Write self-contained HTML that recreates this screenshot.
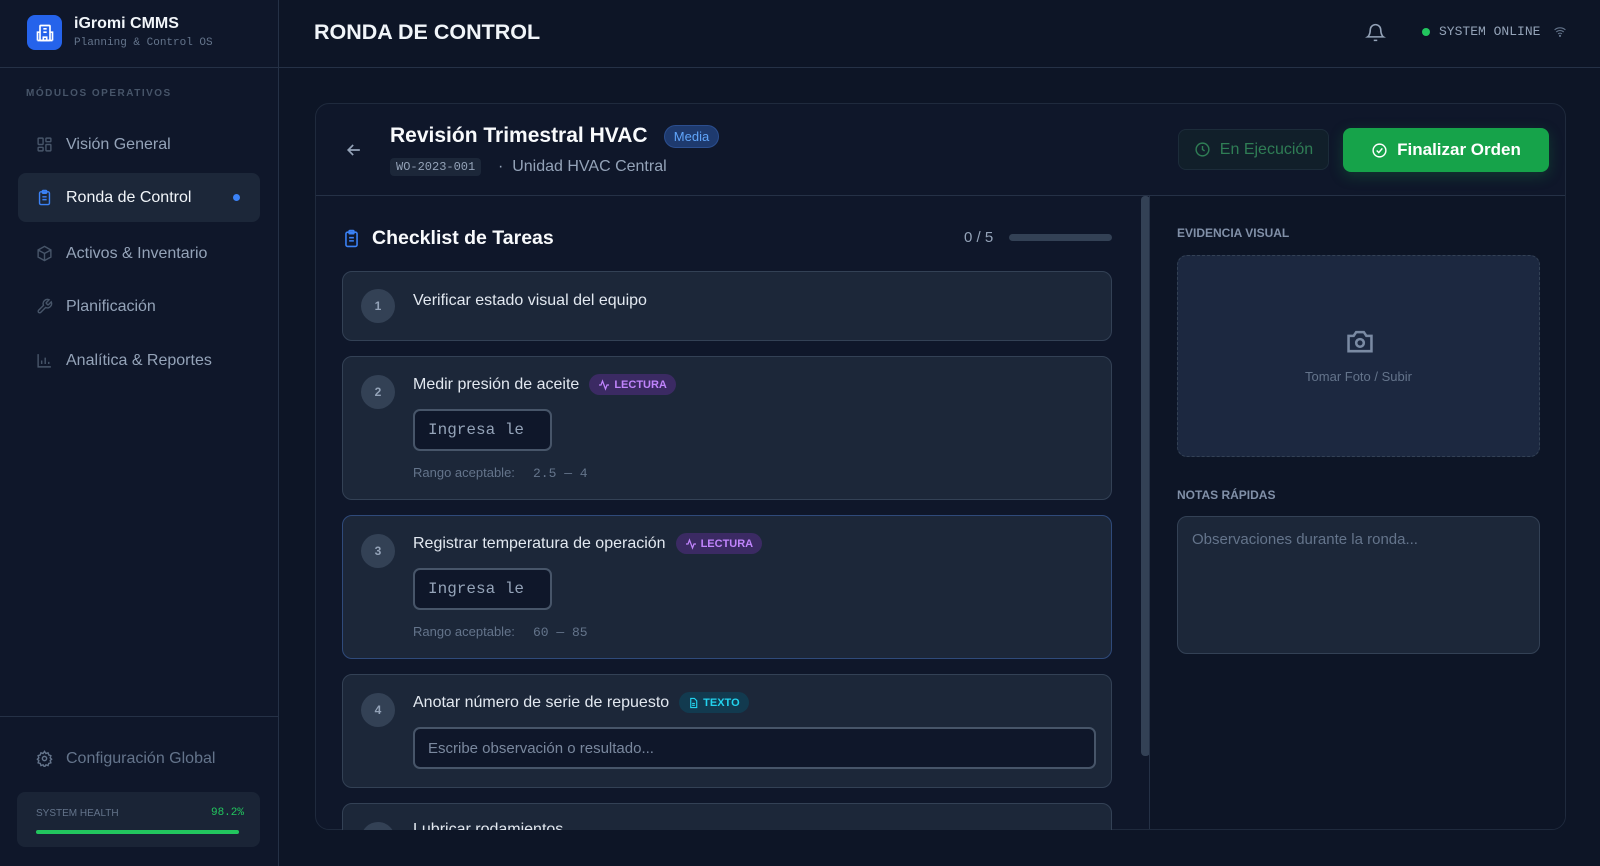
<!DOCTYPE html>
<html><head><meta charset="utf-8"><style>
*{box-sizing:border-box;margin:0;padding:0}
body{width:1600px;height:866px;background:#0d1526;font-family:"Liberation Sans",sans-serif;color:#e2e8f0;position:relative;overflow:hidden}
.a{position:absolute}
.mono{font-family:"Liberation Mono",monospace}
.side{left:0;top:0;width:279px;height:866px;background:#0f172a;border-right:1px solid #253146}
.nav{left:18px;width:242px;height:49px;border-radius:8px;display:flex;align-items:center;padding-left:18px;font-size:16px;color:#94a3b8}
.nav svg{margin-right:13px}
.task{left:342px;width:770px;background:#1c2739;border:1px solid #334155;border-radius:10px}
.num{left:18px;width:34px;height:34px;border-radius:50%;background:#334155;color:#94a3b8;font-size:12px;font-weight:bold;display:flex;align-items:center;justify-content:center}
.tt{left:70px;font-size:16px;color:#e2e8f0;white-space:nowrap;display:flex;align-items:center}
.badge{margin-left:10px;height:21px;border-radius:11px;padding:0 9px;font-size:11px;font-weight:bold;display:inline-flex;align-items:center;gap:4px}
.lec{background:#3b2a63;color:#c084fc}
.inp{left:70px;width:139px;height:42px;border:2px solid #475569;border-radius:7px;background:#0f172a;color:#94a3b8;font-size:16px;padding-left:13px;display:flex;align-items:center}
.rg{left:70px;font-size:13px;color:#64748b}
.lbl{font-size:12px;font-weight:bold;color:#8190a8}
</style></head><body>
<div class="a side">
 <div class="a" style="left:0;top:67px;width:279px;height:1px;background:#253146"></div>
 <div class="a" style="left:27px;top:15px;width:35px;height:35px;border-radius:8px;background:#2563eb;display:flex;align-items:center;justify-content:center">
  <svg width="20" height="20" viewBox="0 0 24 24" fill="none" stroke="#fff" stroke-width="2"><rect x="6" y="3" width="12" height="18" rx="1"/><path d="M3 21h18M10 7h4M10 11h4M10 21v-4h4v4M3 21V11h3M21 21V11h-3"/></svg></div>
 <div class="a" style="left:74px;top:15px;font-size:16px;font-weight:bold;color:#f1f5f9">iGromi CMMS</div>
 <div class="a mono" style="left:74px;top:37px;font-size:11px;color:#64748b">Planning &amp; Control OS</div>
 <div class="a" style="left:26px;top:88px;font-size:10px;font-weight:bold;letter-spacing:1.5px;color:#475569">MÓDULOS OPERATIVOS</div>
 <div class="a nav" style="top:120px"><svg width="17" height="17" viewBox="0 0 24 24" fill="none" stroke="#475569" stroke-width="2"><rect x="3" y="3" width="7" height="9" rx="1"/><rect x="14" y="3" width="7" height="5" rx="1"/><rect x="14" y="12" width="7" height="9" rx="1"/><rect x="3" y="16" width="7" height="5" rx="1"/></svg>Visión General</div>
 <div class="a nav" style="top:173px;background:#1c2739;color:#f1f5f9"><svg width="17" height="17" viewBox="0 0 24 24" fill="none" stroke="#3b82f6" stroke-width="2"><rect x="5" y="4" width="14" height="18" rx="2"/><rect x="9" y="2" width="6" height="4" rx="1"/><path d="M9 11h6M9 15h6"/></svg>Ronda de Control<span class="a" style="right:20px;top:21px;width:7px;height:7px;border-radius:50%;background:#3b82f6"></span></div>
 <div class="a nav" style="top:229px"><svg width="17" height="17" viewBox="0 0 24 24" fill="none" stroke="#475569" stroke-width="2"><path d="M12 2l9 5v10l-9 5-9-5V7z M3 7l9 5 9-5M12 12v10"/></svg>Activos &amp; Inventario</div>
 <div class="a nav" style="top:282px"><svg width="17" height="17" viewBox="0 0 24 24" fill="none" stroke="#475569" stroke-width="2"><path d="M14.7 6.3a1 1 0 0 0 0 1.4l1.6 1.6a1 1 0 0 0 1.4 0l3.8-3.8a6 6 0 0 1-7.9 7.9l-6.9 6.9a2.1 2.1 0 0 1-3-3l6.9-6.9a6 6 0 0 1 7.9-7.9z"/></svg>Planificación</div>
 <div class="a nav" style="top:336px"><svg width="17" height="17" viewBox="0 0 24 24" fill="none" stroke="#475569" stroke-width="2"><path d="M3 3v18h18M8 17v-5M13 17V8M18 17v-3"/></svg>Analítica &amp; Reportes</div>
 <div class="a" style="left:0;top:716px;width:279px;height:1px;background:#253146"></div>
 <div class="a nav" style="top:734px;color:#64748b"><svg width="17" height="17" viewBox="0 0 24 24" fill="none" stroke="#64748b" stroke-width="2"><circle cx="12" cy="12" r="3"/><path d="M12 2l2 3 3-1 1 3 3 1-1 3 2 2-2 2 1 3-3 1-1 3-3-1-2 3-2-3-3 1-1-3-3-1 1-3-2-2 2-2-1-3 3-1 1-3 3 1z"/></svg>Configuración Global</div>
 <div class="a" style="left:17px;top:792px;width:243px;height:55px;border-radius:8px;background:#1a2436">
  <div class="a" style="left:19px;top:16px;font-size:10px;color:#64748b">SYSTEM HEALTH</div>
  <div class="a mono" style="right:16px;top:15px;font-size:11px;color:#22c55e">98.2%</div>
  <div class="a" style="left:19px;top:38px;width:203px;height:4px;border-radius:2px;background:#22c55e"></div>
 </div>
</div>
<div class="a" style="left:279px;top:67px;width:1321px;height:1px;background:#253146"></div>
<div class="a" style="left:314px;top:20px;font-size:21.5px;font-weight:bold;color:#f1f5f9">RONDA DE CONTROL</div>
<svg class="a" style="left:1365px;top:21px" width="21" height="23" viewBox="0 0 24 24" fill="none" stroke="#94a3b8" stroke-width="1.8"><path d="M6 9a6 6 0 0 1 12 0c0 6 3 8 3 8H3s3-2 3-8M10 21h4"/></svg>
<div class="a" style="left:1422px;top:28px;width:8px;height:8px;border-radius:50%;background:#22c55e"></div>
<div class="a mono" style="left:1439px;top:24px;font-size:13px;color:#94a3b8">SYSTEM ONLINE</div>
<svg class="a" style="left:1553px;top:25px" width="14" height="13" viewBox="0 0 24 24" fill="none" stroke="#64748b" stroke-width="2"><path d="M2 9a15 15 0 0 1 20 0M5 13a10 10 0 0 1 14 0M8.5 16.5a5 5 0 0 1 7 0"/><circle cx="12" cy="20" r="1"/></svg>

<div class="a" style="left:315px;top:103px;width:1251px;height:727px;border:1px solid #1f2a3d;border-radius:14px;background:#0f172a;overflow:hidden">
 <div class="a" style="left:0;top:91px;width:1251px;height:1px;background:#253146"></div>
 <svg class="a" style="left:28px;top:36px" width="20" height="20" viewBox="0 0 24 24" fill="none" stroke="#94a3b8" stroke-width="2"><path d="M19 12H5M11 6l-6 6 6 6"/></svg>
 <div class="a" style="left:74px;top:20px;font-size:21px;font-weight:bold;color:#f8fafc">Revisión Trimestral HVAC</div>
 <div class="a" style="left:348px;top:21px;height:23px;width:55px;border-radius:12px;background:#1e3a6e;border:1px solid #2b4e8f;color:#60a5fa;font-size:13px;display:flex;align-items:center;justify-content:center">Media</div>
 <div class="a mono" style="left:74px;top:54px;height:18px;padding:0 6px;border-radius:4px;background:#1c2739;font-size:12px;color:#94a3b8;line-height:18px">WO-2023-001</div>
 <div class="a" style="left:182px;top:54px;font-size:16px;color:#94a3b8">·&nbsp;&nbsp;Unidad HVAC Central</div>
 <div class="a" style="left:862px;top:25px;width:151px;height:41px;border-radius:8px;background:#111f2a;border:1px solid #1c2c3a;color:#2f7d55;font-size:16px;display:flex;align-items:center;justify-content:center;gap:9px"><svg width="17" height="17" viewBox="0 0 24 24" fill="none" stroke="#2f7d55" stroke-width="2"><circle cx="12" cy="12" r="9"/><path d="M12 7v5l3 2"/></svg>En Ejecución</div>
 <div class="a" style="left:1027px;top:24px;width:206px;height:44px;border-radius:8px;background:#16a34a;color:#fff;font-size:17px;font-weight:bold;display:flex;align-items:center;justify-content:center;gap:9px;box-shadow:0 4px 14px rgba(22,163,74,.25)"><svg width="17" height="17" viewBox="0 0 24 24" fill="none" stroke="#fff" stroke-width="2"><circle cx="12" cy="12" r="9"/><path d="M8 12l3 3 5-6"/></svg>Finalizar Orden</div>
 <div class="a" style="left:825px;top:92px;width:9px;height:560px;border-radius:4px;background:#334155"></div>
 <div class="a" style="left:833px;top:92px;width:1px;height:640px;background:#253146"></div>
 <div class="a" style="left:834px;top:92px;width:417px;height:640px;background:#0d1526"></div>
 <div class="a lbl" style="left:861px;top:122px">EVIDENCIA VISUAL</div>
 <div class="a" style="left:861px;top:151px;width:363px;height:202px;border:1px dashed #334155;border-radius:10px;background:#1c2840">
  <svg class="a" style="left:166px;top:71px" width="32" height="28" viewBox="0 0 24 22" fill="none" stroke="#7a8aa3" stroke-width="2"><path d="M3 7h4l2-3h6l2 3h4v12H3z"/><circle cx="12" cy="12.5" r="3"/></svg>
  <div class="a" style="left:0;width:100%;top:113px;text-align:center;font-size:13px;color:#64748b">Tomar Foto / Subir</div>
 </div>
 <div class="a lbl" style="left:861px;top:384px">NOTAS RÁPIDAS</div>
 <div class="a" style="left:861px;top:412px;width:363px;height:138px;border:1px solid #334155;border-radius:10px;background:#1c2739;padding:14px;font-size:15px;color:#64748b">Observaciones durante la ronda...</div>
</div>

<svg class="a" style="left:342px;top:228px" width="19" height="21" viewBox="0 0 24 24" fill="none" stroke="#3b82f6" stroke-width="2"><rect x="5" y="4" width="14" height="18" rx="2"/><rect x="9" y="2" width="6" height="4" rx="1"/><path d="M9 11h6M9 15h6"/></svg>
<div class="a" style="left:372px;top:227px;font-size:19.5px;font-weight:bold;color:#f8fafc">Checklist de Tareas</div>
<div class="a" style="left:964px;top:229px;font-size:15px;color:#94a3b8">0 / 5</div>
<div class="a" style="left:1009px;top:234px;width:103px;height:7px;border-radius:4px;background:#334155"></div>

<div class="a task" style="top:271px;height:70px"><div class="a num" style="top:17px">1</div><div class="a tt" style="top:20px">Verificar estado visual del equipo</div></div>
<div class="a task" style="top:356px;height:144px"><div class="a num" style="top:18px">2</div><div class="a tt" style="top:17px">Medir presión de aceite<span class="badge lec"><svg width="12" height="12" viewBox="0 0 24 24" fill="none" stroke="#c084fc" stroke-width="2.5"><path d="M2 12h4l3-8 6 16 3-8h4"/></svg>LECTURA</span></div><div class="a inp mono" style="top:52px">Ingresa le</div><div class="a rg" style="top:108px">Rango aceptable:&nbsp;&nbsp;&nbsp;&nbsp;&nbsp;<span class="mono">2.5 — 4</span></div></div>
<div class="a task" style="top:515px;height:144px;border-color:#2f4a7a"><div class="a num" style="top:18px">3</div><div class="a tt" style="top:17px">Registrar temperatura de operación<span class="badge lec"><svg width="12" height="12" viewBox="0 0 24 24" fill="none" stroke="#c084fc" stroke-width="2.5"><path d="M2 12h4l3-8 6 16 3-8h4"/></svg>LECTURA</span></div><div class="a inp mono" style="top:52px">Ingresa le</div><div class="a rg" style="top:108px">Rango aceptable:&nbsp;&nbsp;&nbsp;&nbsp;&nbsp;<span class="mono">60 — 85</span></div></div>
<div class="a task" style="top:674px;height:114px"><div class="a num" style="top:18px">4</div><div class="a tt" style="top:17px">Anotar número de serie de repuesto<span class="badge" style="background:#123a4f;color:#22d3ee"><svg width="11" height="12" viewBox="0 0 24 24" fill="none" stroke="#22d3ee" stroke-width="2.5"><path d="M6 2h8l5 5v15H6zM9 13h6M9 17h6"/></svg>TEXTO</span></div><div class="a inp" style="top:52px;width:683px;font-size:15px;color:#7a889e">Escribe observación o resultado...</div></div>
<div class="a" style="left:315px;top:803px;width:834px;height:27px;overflow:hidden"><div class="a task" style="left:27px;top:0;height:80px"><div class="a num" style="top:18px"></div><div class="a tt" style="top:17px">Lubricar rodamientos</div></div></div>
</body></html>
